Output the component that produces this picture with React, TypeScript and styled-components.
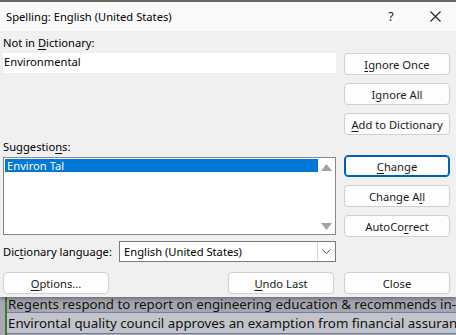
import React from 'react';
import styled, { createGlobalStyle } from 'styled-components';

const GlobalStyle = createGlobalStyle`
  html, body {
    margin: 0;
    padding: 0;
    width: 456px;
    height: 335px;
    overflow: hidden;
    background: #a9a9b1;
  }
  body {
    font-family: "Noto Sans", "Open Sans", sans-serif;
    font-size: 11.2px;
    color: #000;
  }
`;

const Page = styled.div`
  display: flex;
  flex-direction: column;
  width: 456px;
  height: 335px;
`;

const TopStrip = styled.div`
  height: 2px;
  background: #6d6a64;
`;

const Dialog = styled.div`
  background: #f0f0f0;
  box-shadow: 0 2px 4px rgba(0, 0, 0, 0.35);
  position: relative;
  z-index: 1;
`;

const TitleBar = styled.div`
  height: 29px;
  background: #fafafa;
  display: flex;
  align-items: center;
  padding-left: 6px;
`;

const Title = styled.div`
  flex: 1;
`;

const TitleButton = styled.div<{ $w: number }>`
  width: ${(p) => p.$w}px;
  height: 29px;
  display: flex;
  align-items: center;
  justify-content: center;
  font-size: 12.5px;
  color: #222;
`;

const Body = styled.div`
  padding: 4px 6px 3px 3px;
`;

const Main = styled.div`
  display: flex;
  gap: 8px;
`;

const LeftCol = styled.div`
  width: 333px;
  display: flex;
  flex-direction: column;
`;

const RightCol = styled.div`
  width: 106px;
  display: flex;
  flex-direction: column;
  padding-top: 18px;
`;

const Label = styled.div<{ $top?: number }>`
  height: 16px;
  line-height: 16px;
  margin-top: ${(p) => p.$top ?? 0}px;
  white-space: nowrap;
`;

const TextBox = styled.div`
  margin-top: 2px;
  height: 20px;
  line-height: 18px;
  background: #fff;
  padding-left: 1px;
`;

const ListBox = styled.div`
  margin-top: 2px;
  height: 78px;
  box-sizing: border-box;
  border: 1px solid #828790;
  background: #fff;
  display: flex;
`;

const ListItems = styled.div`
  flex: 1;
  padding: 1px 0 0 1px;
`;

const ListItem = styled.div<{ $selected?: boolean }>`
  height: 13px;
  line-height: 13px;
  padding-left: 2px;
  background: ${(p) => (p.$selected ? '#0078d7' : 'transparent')};
  color: ${(p) => (p.$selected ? '#fff' : '#000')};
`;

const ScrollBar = styled.div`
  width: 17px;
  display: flex;
  flex-direction: column;
  justify-content: space-between;
  align-items: center;
  padding: 6px 0 4px;
`;

const LangRow = styled.div`
  margin-top: 6px;
  display: flex;
  align-items: center;
`;

const LangLabel = styled.div`
  width: 116px;
  white-space: nowrap;
`;

const Select = styled.div`
  flex: 1;
  height: 21px;
  box-sizing: border-box;
  border: 1px solid #7a7a7a;
  background: #fff;
  display: flex;
  align-items: center;
`;

const SelectValue = styled.div`
  flex: 1;
  padding-left: 4px;
`;

const SelectArrow = styled.div`
  width: 17px;
  height: 19px;
  border-left: 1px solid #d9d9d9;
  display: flex;
  align-items: center;
  justify-content: center;
`;

const Button = styled.div<{ $primary?: boolean; $gap?: number; $left?: number }>`
  box-sizing: border-box;
  width: 106px;
  height: 22px;
  margin-top: ${(p) => p.$gap ?? 0}px;
  margin-left: ${(p) => p.$left ?? 0}px;
  border-radius: 4px;
  background: #fdfdfd;
  border: ${(p) => (p.$primary ? '1px solid #005fb8' : '1px solid #d0d0d0')};
  box-shadow: ${(p) => (p.$primary ? 'inset 0 0 0 1px #005fb8' : 'none')};
  display: flex;
  align-items: center;
  justify-content: center;
  color: #1a1a1a;
  white-space: nowrap;
`;

const BottomRow = styled.div`
  margin-top: 10px;
  display: flex;
`;

const Spacer = styled.div`
  flex: 1;
`;

const Acc = styled.span`
  text-decoration: underline;
  text-underline-offset: 2px;
`;

const Doc = styled.div`
  flex: 1;
  display: flex;
  flex-direction: column;
  margin-top: -6px;
  border-left: 2px solid #3a7a3a;
  margin-left: 5px;
`;

const DocRow = styled.div<{ $bg: string; $h: number; $pad: number }>`
  height: ${(p) => p.$h}px;
  display: flex;
  align-items: center;
  padding-top: ${(p) => p.$pad}px;
  box-sizing: border-box;
  background: ${(p) => p.$bg};
  border-bottom: 1px solid #6f7fa6;
  font-size: 13.3px;
  line-height: 18px;
  color: #111;
  white-space: nowrap;
  overflow: hidden;
  padding-left: 1px;
`;

const Up = () => (
  <svg width="11" height="7" viewBox="0 0 11 7">
    <path d="M0 7 L5.5 0 L11 7 Z" fill="#a3a3a3" />
  </svg>
);

const Down = () => (
  <svg width="11" height="7" viewBox="0 0 11 7">
    <path d="M0 0 L5.5 7 L11 0 Z" fill="#a3a3a3" />
  </svg>
);

const Chevron = () => (
  <svg width="9" height="6" viewBox="0 0 9 6">
    <path d="M0.5 0.5 L4.5 4.5 L8.5 0.5" stroke="#555" fill="none" strokeWidth="1" />
  </svg>
);

const Close = () => (
  <svg width="11" height="11" viewBox="0 0 11 11">
    <path d="M0.5 0.5 L10.5 10.5 M10.5 0.5 L0.5 10.5" stroke="#222" strokeWidth="1.1" />
  </svg>
);

export default function App() {
  return (
    <Page>
      <GlobalStyle />
      <TopStrip />
      <Dialog>
        <TitleBar>
          <Title>Spelling: English (United States)</Title>
          <TitleButton $w={46}>?</TitleButton>
          <TitleButton $w={42}>
            <Close />
          </TitleButton>
        </TitleBar>
        <Body>
          <Main>
            <LeftCol>
              <Label>
                Not in <Acc>D</Acc>ictionary:
              </Label>
              <TextBox>Environmental</TextBox>
              <Label $top={66}>
                Suggestio<Acc>n</Acc>s:
              </Label>
              <ListBox>
                <ListItems>
                  <ListItem $selected>Environ Tal</ListItem>
                </ListItems>
                <ScrollBar>
                  <Up />
                  <Down />
                </ScrollBar>
              </ListBox>
              <LangRow>
                <LangLabel>
                  Dic<Acc>t</Acc>ionary language:
                </LangLabel>
                <Select>
                  <SelectValue>English (United States)</SelectValue>
                  <SelectArrow>
                    <Chevron />
                  </SelectArrow>
                </Select>
              </LangRow>
            </LeftCol>
            <RightCol>
              <Button>
                <Acc>I</Acc>gnore Once
              </Button>
              <Button $gap={8}>
                I<Acc>g</Acc>nore All
              </Button>
              <Button $gap={8}>
                <Acc>A</Acc>dd to Dictionary
              </Button>
              <Button $primary $gap={20}>
                <Acc>C</Acc>hange
              </Button>
              <Button $gap={8}>
                Change A<Acc>l</Acc>l
              </Button>
              <Button $gap={8}>
                AutoCo<Acc>r</Acc>rect
              </Button>
            </RightCol>
          </Main>
          <BottomRow>
            <Button>
              <Acc>O</Acc>ptions...
            </Button>
            <Spacer />
            <Button>
              <Acc>U</Acc>ndo Last
            </Button>
            <Button $left={10}>Close</Button>
          </BottomRow>
        </Body>
      </Dialog>
      <Doc>
        <DocRow $bg="#a6a6ae" $h={22} $pad={4}>
          Regents respond to report on engineering education &amp; recommends in-service
        </DocRow>
        <DocRow $bg="#c3c3cb" $h={21} $pad={0}>
          Environtal quality council approves an examption from financial assurance
        </DocRow>
      </Doc>
    </Page>
  );
}
